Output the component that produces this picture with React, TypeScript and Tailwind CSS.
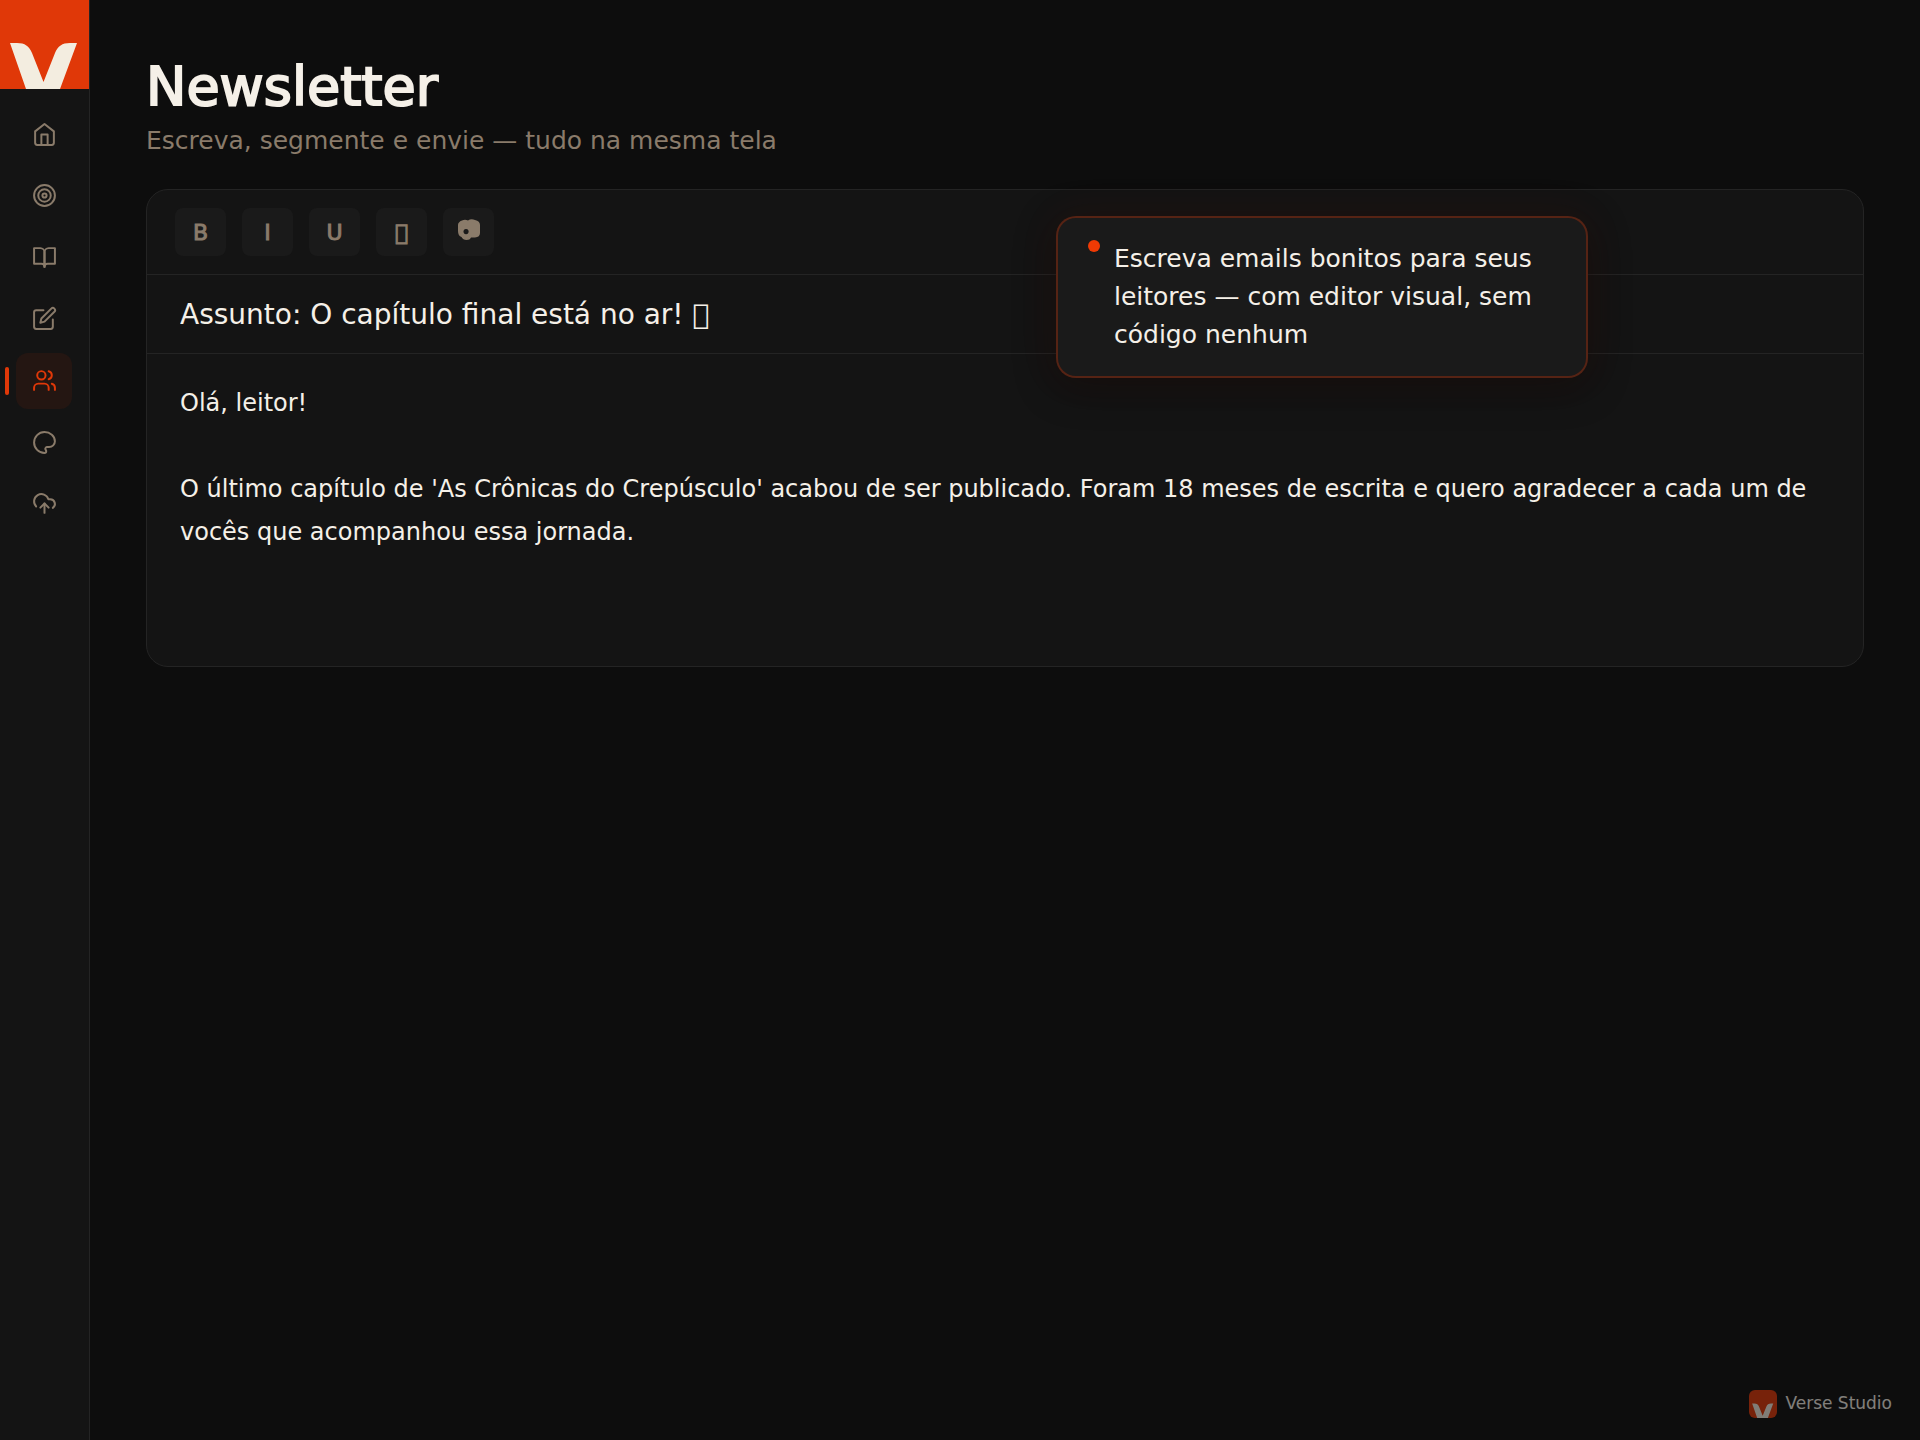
import React from 'react';
import { clsx } from 'clsx';

interface NavItem {
  label: string;
  icon: React.ReactNode;
  active?: boolean;
}

const navItems: NavItem[] = [
  {
    label: 'Início',
    icon: (
      <>
        <path d="M3 9l9-7 9 7v11a2 2 0 0 1-2 2H5a2 2 0 0 1-2-2z" />
        <path d="M9 22V12h6v10" />
      </>
    ),
  },
  {
    label: 'Metas',
    icon: (
      <>
        <circle cx="12" cy="12" r="10" />
        <circle cx="12" cy="12" r="6" />
        <circle cx="12" cy="12" r="2" />
      </>
    ),
  },
  {
    label: 'Livros',
    icon: (
      <>
        <path d="M2 3h6a4 4 0 0 1 4 4v14a3 3 0 0 0-3-3H2z" />
        <path d="M22 3h-6a4 4 0 0 0-4 4v14a3 3 0 0 1 3-3h7z" />
      </>
    ),
  },
  {
    label: 'Escrever',
    icon: (
      <>
        <path d="M11 4H4a2 2 0 0 0-2 2v14a2 2 0 0 0 2 2h14a2 2 0 0 0 2-2v-7" />
        <path d="M18.5 2.5a2.121 2.121 0 0 1 3 3L12 15l-4 1 1-4z" />
      </>
    ),
  },
  {
    label: 'Leitores',
    active: true,
    icon: (
      <>
        <path d="M16 21v-2a4 4 0 0 0-4-4H6a4 4 0 0 0-4 4v2" />
        <circle cx="9" cy="7" r="4" />
        <path d="M22 21v-2a4 4 0 0 0-3-3.87" />
        <path d="M16 3.13a4 4 0 0 1 0 7.75" />
      </>
    ),
  },
  {
    label: 'Aparência',
    icon: (
      <path d="M12 2C6.5 2 2 6.5 2 12s4.5 10 10 10c.926 0 1.648-.746 1.648-1.688 0-.437-.18-.835-.437-1.125-.29-.289-.438-.652-.438-1.125a1.64 1.64 0 0 1 1.668-1.668h1.996c3.051 0 5.555-2.503 5.555-5.554C21.965 6.012 17.461 2 12 2z" />
    ),
  },
  {
    label: 'Publicar',
    icon: (
      <>
        <path d="M4 14.899A7 7 0 1 1 15.71 8h1.79a4.5 4.5 0 0 1 2.5 8.242" />
        <path d="M12 12v9" />
        <path d="m16 16-4-4-4 4" />
      </>
    ),
  },
];

const Logo: React.FC<{ className?: string }> = ({ className }) => (
  <svg viewBox="0 0 89 89" className={className} aria-hidden="true">
    <rect width="89" height="89" fill="#e03808" />
    <path d="M10 43H17C25 43 29 46 32 53L43.500 82L55 53C58 46 62 43 70 43H77L60 89H26Z" fill="#f3ede0" />
  </svg>
);

const CameraIcon = () => (
  <svg viewBox="0 0 24 24" className="mb-1 h-6 w-6" aria-hidden="true">
    <path
      fillRule="evenodd"
      fill="currentColor"
      d="M5 2.500Q8 1 11 2.500Q14 .500 18 2Q23 3 23 7V15Q23 19 18 19.500H14Q13 22 9.500 22Q6 22 4.500 19Q1 18 1 13V7Q1 4 5 2.500ZM9 11a2.600 2.600 0 1 0 .1 0Z"
    />
  </svg>
);

const toolClass =
  'flex h-12 w-[51px] items-center justify-center rounded-lg bg-[#1a1a1a] text-[22px] text-[#8a7b6a] [-webkit-text-stroke:1px_currentColor]';

const Sidebar = () => (
  <aside className="flex w-[90px] shrink-0 flex-col border-r border-[#242424] bg-[#141414]">
    <Logo className="h-[89px] w-[89px]" />
    <nav className="mt-[17px] flex h-[426px] flex-col items-start justify-between pl-4">
      {navItems.map(item => (
        <button
          key={item.label}
          type="button"
          aria-label={item.label}
          className={clsx(
            'relative flex h-14 w-14 items-center justify-center rounded-xl',
            item.active ? 'bg-[#241612] text-[#e03808]' : 'text-[#8a7b6a]'
          )}
        >
          {item.active && (
            <span className="absolute -left-[11px] h-7 w-1 rounded-sm bg-[#e03808]" />
          )}
          <svg
            viewBox="0 0 24 24"
            className="h-[25px] w-[25px]"
            fill="none"
            stroke="currentColor"
            strokeWidth="1.900"
            strokeLinecap="round"
            strokeLinejoin="round"
          >
            {item.icon}
          </svg>
        </button>
      ))}
    </nav>
  </aside>
);

const Editor = () => (
  <section className="mt-[33px] overflow-hidden rounded-[22px] border border-[#242424] bg-[#141414]">
    <div className="flex gap-4 border-b border-[#242424] px-7 py-[18px]">
      <button type="button" className={toolClass}>B</button>
      <button type="button" className={toolClass}>I</button>
      <button type="button" className={toolClass}>U</button>
      <button type="button" className={toolClass} aria-label="Link">{'\u{F0000}'}</button>
      <button type="button" className={toolClass} aria-label="Imagem">
        <CameraIcon />
      </button>
    </div>
    <div className="border-b border-[#242424]">
      <input
        type="text"
        aria-label="Assunto"
        defaultValue={'Assunto: O capítulo final está no ar! \u{F0000}'}
        className="block h-[78px] w-full bg-transparent px-[33px] text-[28px] outline-none"
      />
    </div>
    <textarea
      aria-label="Mensagem"
      defaultValue={
        "Olá, leitor!\n\nO último capítulo de 'As Crônicas do Crepúsculo' acabou de ser publicado. Foram 18 meses de escrita e quero agradecer a cada um de vocês que acompanhou essa jornada."
      }
      className="block h-[312px] w-full resize-none bg-transparent px-[33px] py-7 text-[24px] leading-[43px] outline-none"
    />
  </section>
);

export default function App() {
  return (
    <div className="relative flex min-h-screen bg-[#0d0d0d] font-['DejaVu_Sans',sans-serif] text-[#f5f0e8]">
      <Sidebar />
      <main className="min-w-0 flex-1 px-14 pt-14">
        <h1 className="text-[54px] font-normal leading-[62px] [-webkit-text-stroke:2px_currentColor]">
          Newsletter
        </h1>
        <p className="mt-2 text-[25px] leading-[30px] text-[#8a7b6a]">
          Escreva, segmente e envie — tudo na mesma tela
        </p>
        <Editor />
      </main>

      <div
        role="tooltip"
        className="absolute left-[55%] top-[15%] flex w-[532px] gap-[14px] rounded-[20px] border-2 border-[#e03808]/30 bg-[#1a1a1a] px-[30px] py-[22px] shadow-[0_8px_40px_rgba(0,0,0,0.4),0_0_40px_rgba(224,56,8,0.08)]"
      >
        <span className="h-3 w-3 shrink-0 rounded-full bg-[#f03a04]" />
        <p className="text-[25px] leading-[38px]">
          Escreva emails bonitos para seus leitores — com editor visual, sem código nenhum
        </p>
      </div>

      <footer className="absolute bottom-[22px] right-7 flex items-center gap-2 opacity-50">
        <Logo className="h-7 w-7 rounded-md" />
        <span className="text-[17px]">Verse Studio</span>
      </footer>
    </div>
  );
}
